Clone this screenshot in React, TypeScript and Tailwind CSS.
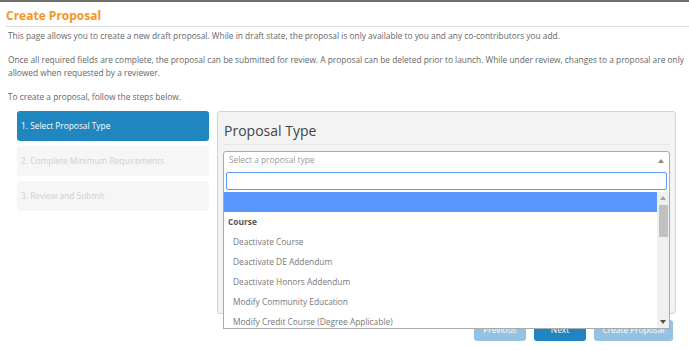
import React from "react";

const font = { fontFamily: '"Open Sans", "Noto Sans", sans-serif' };

const steps = [
  { label: "1. Select Proposal Type", active: true },
  { label: "2. Complete Minimum Requirements", active: false },
  { label: "3. Review and Submit", active: false },
];

const options = [
  "Deactivate Course",
  "Deactivate DE Addendum",
  "Deactivate Honors Addendum",
  "Modify Community Education",
  "Modify Credit Course (Degree Applicable)",
];

const App = () => {
  return (
    <div
      className="w-[689px] h-[350px] overflow-hidden bg-white border-t-2 border-[#6f6f6f] text-[#666]"
      style={font}
    >
      {/* Header */}
      <div className="pl-[6px] pt-[5px]">
        <h1 className="text-[12px] font-bold text-[#f7941d] leading-[17px]">
          Create Proposal
        </h1>
        <div className="mt-[2px] h-px bg-[#ddd]" />
      </div>

      {/* Intro text */}
      <div className="pl-[8px] pr-[4px] text-[8.35px] leading-[13px]">
        <p className="mt-[2px]">
          This page allows you to create a new draft proposal. While in draft
          state, the proposal is only available to you and any co-contributors
          you add.
        </p>
        <p className="mt-[11px]">
          Once all required fields are complete, the proposal can be submitted
          for review. A proposal can be deleted prior to launch. While under
          review, changes to a proposal are only allowed when requested by a
          reviewer.
        </p>
        <p className="mt-[11px]">To create a proposal, follow the steps below.</p>
      </div>

      {/* Wizard */}
      <div className="flex gap-[8px] pl-[17px] mt-[8px]">
        {/* Steps */}
        <div className="flex flex-col gap-[5px] w-[192px]">
          {steps.map((step) => (
            <div
              key={step.label}
              className={`h-[30px] rounded-[3px] flex items-center pl-[4px] text-[8.35px] ${
                step.active
                  ? "bg-[#1f86c0] text-white"
                  : "bg-[#f6f6f6] text-[#cfcfcf]"
              }`}
            >
              {step.label}
            </div>
          ))}
        </div>

        {/* Panel + buttons */}
        <div className="w-[459px] flex flex-col">
          <div className="relative h-[203px] bg-[#f3f3f3] border border-[#d4d4d4] rounded-[3px] px-[5px]">
            <h2 className="text-[14px] text-[#444] leading-[20px] pt-[9px] pb-[3px] pl-[1px]">
              Proposal Type
            </h2>
            <div className="h-px bg-[#e6e6e6]" />

            {/* Select */}
            <div className="relative mt-[6px]">
              <div className="h-[19px] bg-white border border-[#aaa] rounded-t-[3px] flex items-center justify-between pl-[5px] pr-[5px] text-[8.35px] text-[#999]">
                <span>Select a proposal type</span>
                <svg width="6" height="4" viewBox="0 0 6 4">
                  <path d="M0 4 L3 0 L6 4 Z" fill="#888" />
                </svg>
              </div>

              {/* Dropdown overlay */}
              <div className="absolute left-0 right-0 top-[18px] h-[160px] bg-white border border-t-0 border-[#aaa] z-10 flex flex-col">
                <div className="px-[2px] pt-[3px] pb-[2px]">
                  <div className="h-[18px] border border-[#5897fb] rounded-[2px]" />
                </div>
                <div className="flex flex-1 overflow-hidden">
                  <div className="flex-1 overflow-hidden text-[8.35px]">
                    <div className="h-[20px] bg-[#5897fb]" />
                    <div className="h-[20px] flex items-center pl-[4px] font-bold text-[#555]">
                      Course
                    </div>
                    {options.map((opt) => (
                      <div
                        key={opt}
                        className="h-[20px] flex items-center pl-[9px] text-[#777]"
                      >
                        {opt}
                      </div>
                    ))}
                  </div>
                  {/* Scrollbar */}
                  <div className="w-[12px] bg-[#f0f0f0] flex flex-col items-center">
                    <svg width="6" height="4" viewBox="0 0 6 4" className="mt-[4px]">
                      <path d="M0 4 L3 0 L6 4 Z" fill="#a3a3a3" />
                    </svg>
                    <div className="mt-[5px] w-[9px] h-[32px] bg-[#c1c1c1]" />
                    <div className="flex-1" />
                    <svg width="6" height="4" viewBox="0 0 6 4" className="mb-[4px]">
                      <path d="M0 0 L6 0 L3 4 Z" fill="#505050" />
                    </svg>
                  </div>
                </div>
              </div>
            </div>
          </div>

          {/* Buttons */}
          <div className="flex justify-end gap-[8px] mt-[6px] pr-[3px] text-[8.35px] text-white">
            <div className="w-[52px] h-[21px] rounded-[3px] bg-[#93c3e1] flex items-center justify-center">
              Previous
            </div>
            <div className="w-[52px] h-[21px] rounded-[3px] bg-[#1f86c0] flex items-center justify-center">
              Next
            </div>
            <div className="w-[79px] h-[21px] rounded-[3px] bg-[#93c3e1] flex items-center justify-center">
              Create Proposal
            </div>
          </div>
        </div>
      </div>
    </div>
  );
};

export default App;
